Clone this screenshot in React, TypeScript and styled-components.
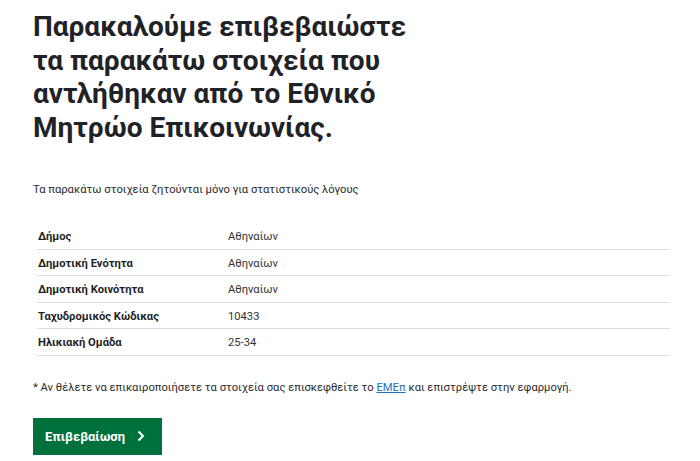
import { Fragment } from "react";
import styled, { createGlobalStyle } from "styled-components";

const GlobalStyle = createGlobalStyle`
  body {
    margin: 0;
    background: #ffffff;
    font-family: Roboto, "Liberation Sans", sans-serif;
    color: #0b0c0c;
  }
`;

const Page = styled.main`
  padding: 10px 30px 0 33px;
  width: 700px;
  box-sizing: border-box;
`;

const Title = styled.h1`
  font-family: Roboto, "Liberation Sans", sans-serif;
  font-size: 28px;
  line-height: 33.5px;
  font-weight: 700;
  color: #1f2327;
  margin: 0;
  max-width: 390px;
`;

const Lead = styled.p`
  font-size: 11.2px;
  color: #2b2b2b;
  margin: 39px 0 0;
`;

const Table = styled.dl`
  margin: 27px 0 0;
  display: grid;
  grid-template-columns: 191px 1fr;
  padding-left: 4px;
`;

const Label = styled.dt`
  font-size: 11.2px;
  line-height: 13px;
  font-weight: 700;
  color: #1f1f1f;
  margin: 0;
  padding: 7px 0 5.5px 1px;
  border-bottom: 1px solid #dedbe0;
`;

const Value = styled.dd`
  font-size: 11.2px;
  line-height: 13px;
  color: #333;
  margin: 0;
  padding: 7px 0 5.5px;
  border-bottom: 1px solid #dedbe0;
`;

const Note = styled.p`
  font-size: 11.2px;
  color: #2b2b2b;
  margin: 25px 0 0;
`;

const Link = styled.a`
  color: #1d70b8;
  text-decoration: underline;
`;

const Button = styled.button`
  margin-top: 24px;
  display: inline-flex;
  align-items: center;
  gap: 12px;
  height: 37px;
  padding: 0 17px 0 12px;
  background: #00703c;
  border: none;
  box-shadow: 0 2px 0 #002d18;
  color: #fff;
  font-family: Roboto, "Liberation Sans", sans-serif;
  font-size: 13px;
  font-weight: 700;
  cursor: pointer;
`;

const rows = [
  ["Δήμος", "Αθηναίων"],
  ["Δημοτική Ενότητα", "Αθηναίων"],
  ["Δημοτική Κοινότητα", "Αθηναίων"],
  ["Ταχυδρομικός Κώδικας", "10433"],
  ["Ηλικιακή Ομάδα", "25-34"],
];

export default function App() {
  return (
    <>
      <GlobalStyle />
      <Page>
        <Title>
          Παρακαλούμε επιβεβαιώστε τα παρακάτω στοιχεία που αντλήθηκαν από το
          Εθνικό Μητρώο Επικοινωνίας.
        </Title>
        <Lead>Τα παρακάτω στοιχεία ζητούνται μόνο για στατιστικούς λόγους</Lead>
        <Table>
          {rows.map(([k, v]) => (
            <Fragment key={k}>
              <Label>{k}</Label>
              <Value>{v}</Value>
            </Fragment>
          ))}
        </Table>
        <Note>
          * Αν θέλετε να επικαιροποιήσετε τα στοιχεία σας επισκεφθείτε το{" "}
          <Link href="#">ΕΜΕπ</Link> και επιστρέψτε στην εφαρμογή.
        </Note>
        <Button>
          Επιβεβαίωση
          <svg width="8" height="12" viewBox="0 0 8 12">
            <path d="M1.5 1.5 6 6l-4.5 4.5" fill="none" stroke="#fff" strokeWidth="2" />
          </svg>
        </Button>
      </Page>
    </>
  );
}
